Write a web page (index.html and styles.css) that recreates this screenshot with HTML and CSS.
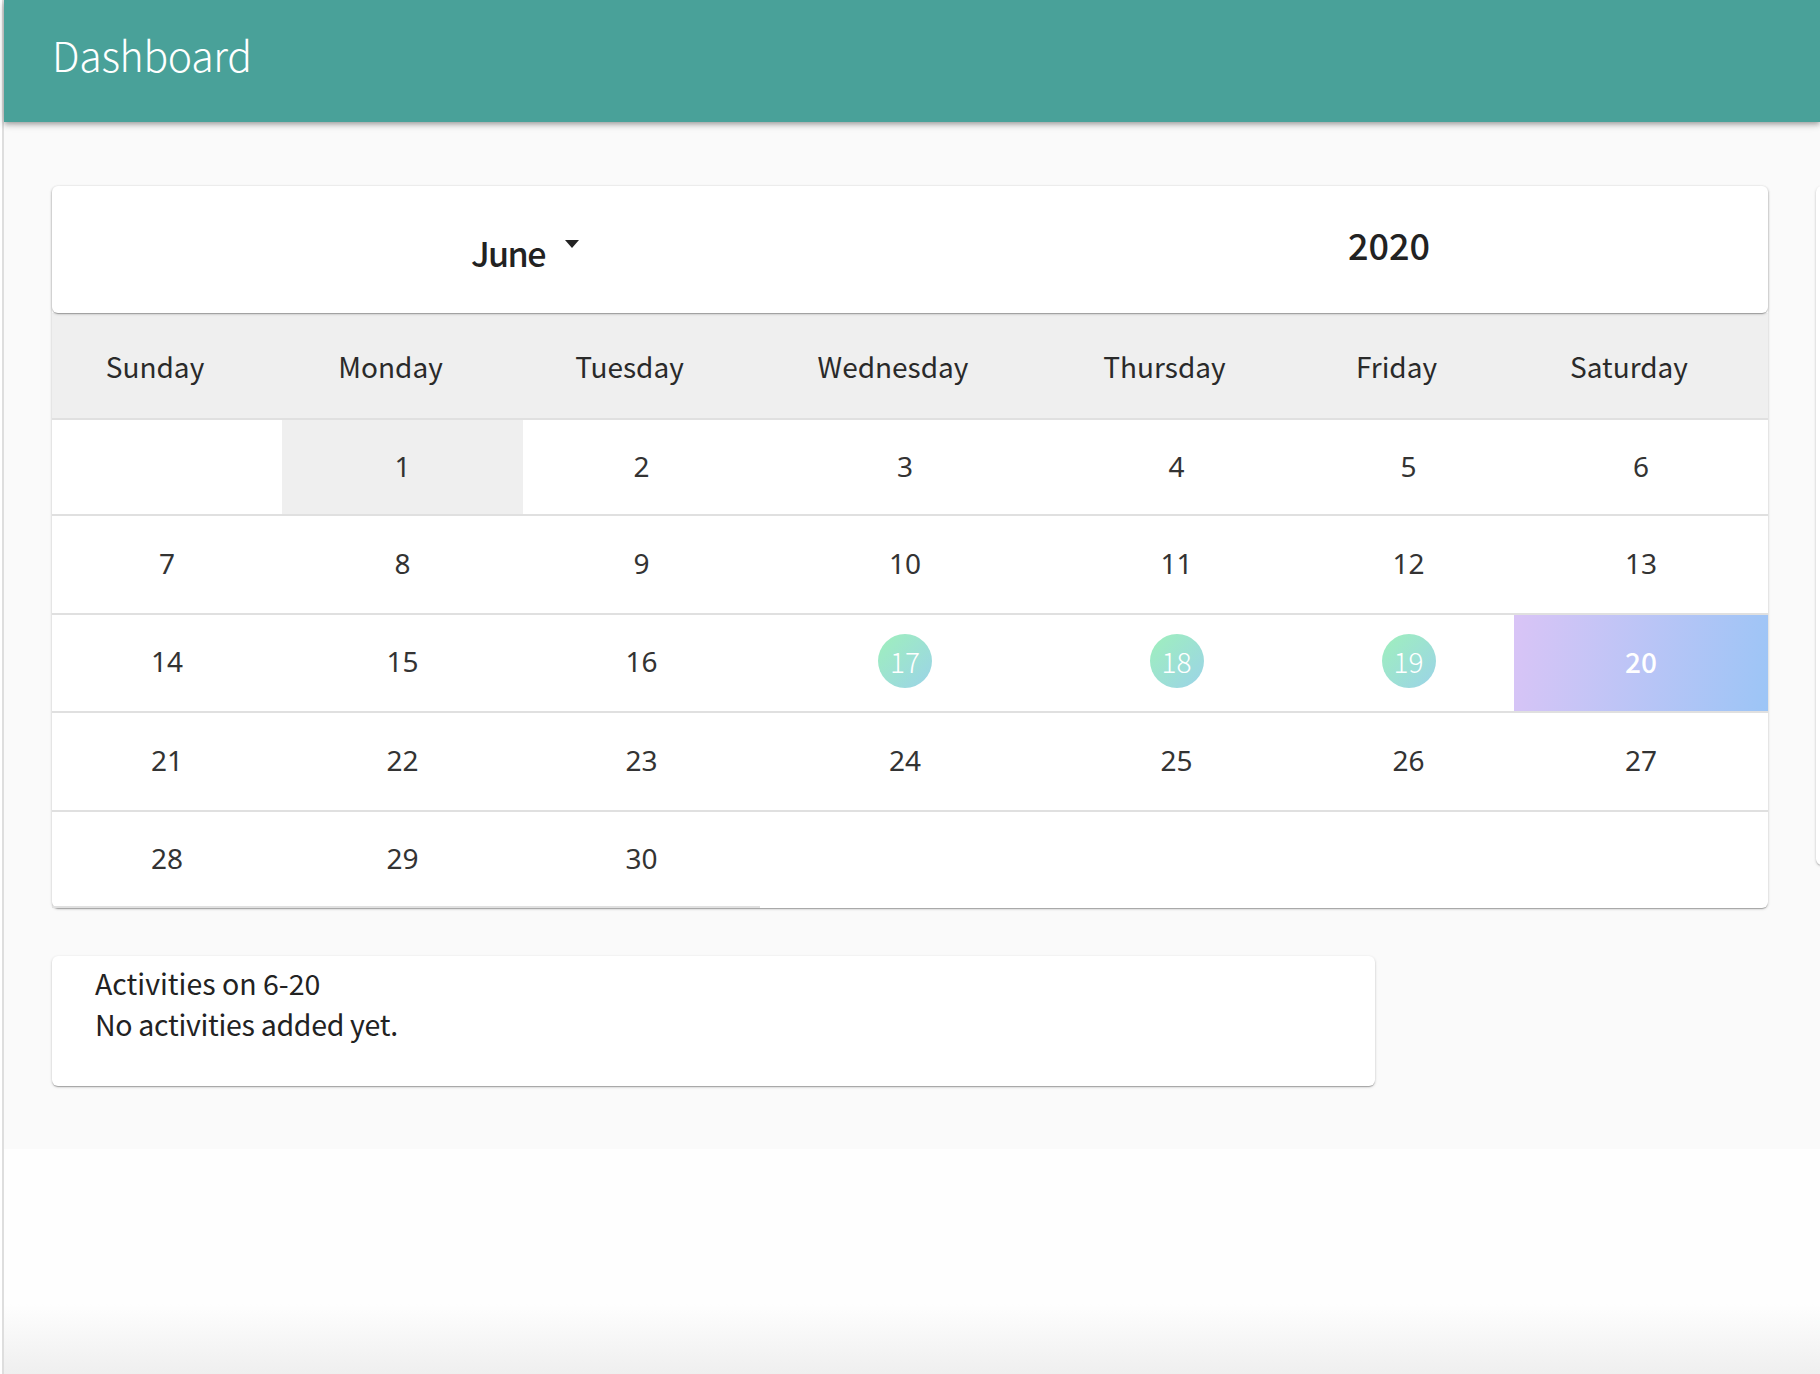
FILE: index.html
```html
<!DOCTYPE html>
<html lang="en">
<head>
<meta charset="utf-8">
<title>Dashboard</title>
<link rel="stylesheet" href="styles.css">
</head>
<body>
<div class="app">
  <header class="appbar"><h1 class="title">Dashboard</h1></header>
  <main class="content">
    <div class="layout">
      <div class="main-col">
        <section class="calendar">
          <div class="cal-head">
            <div class="month-col">
              <span class="month">June</span>
              <svg class="caret" width="16" height="8" viewBox="0 0 16 8"><path d="M1 0 L15 0 L8 8 Z" fill="#222"/></svg>
            </div>
            <div class="year-col"><span class="year">2020</span></div>
          </div>
          <div class="cal-body">
            <div class="grid weekdays">
              <div class="wd">Sunday</div><div class="wd">Monday</div><div class="wd">Tuesday</div><div class="wd">Wednesday</div><div class="wd">Thursday</div><div class="wd">Friday</div><div class="wd">Saturday</div>
            </div>
            <div class="grid week first">
              <div class="day empty"></div><div class="day today-ish"><span class="num">1</span></div><div class="day"><span class="num">2</span></div><div class="day"><span class="num">3</span></div><div class="day"><span class="num">4</span></div><div class="day"><span class="num">5</span></div><div class="day"><span class="num">6</span></div>
            </div>
            <div class="grid week">
              <div class="day"><span class="num">7</span></div><div class="day"><span class="num">8</span></div><div class="day"><span class="num">9</span></div><div class="day"><span class="num">10</span></div><div class="day"><span class="num">11</span></div><div class="day"><span class="num">12</span></div><div class="day"><span class="num">13</span></div>
            </div>
            <div class="grid week">
              <div class="day"><span class="num">14</span></div><div class="day"><span class="num">15</span></div><div class="day"><span class="num">16</span></div><div class="day"><span class="num dot">17</span></div><div class="day"><span class="num dot">18</span></div><div class="day"><span class="num dot">19</span></div><div class="day selected"><span class="num sel">20</span></div>
            </div>
            <div class="grid week">
              <div class="day"><span class="num">21</span></div><div class="day"><span class="num">22</span></div><div class="day"><span class="num">23</span></div><div class="day"><span class="num">24</span></div><div class="day"><span class="num">25</span></div><div class="day"><span class="num">26</span></div><div class="day"><span class="num">27</span></div>
            </div>
            <div class="grid week last">
              <div class="day filled"><span class="num">28</span></div><div class="day filled"><span class="num">29</span></div><div class="day filled"><span class="num">30</span></div><div class="day empty"></div><div class="day empty"></div><div class="day empty"></div><div class="day empty"></div>
            </div>
          </div>
        </section>
        <section class="activities">
          <p class="act-title">Activities on 6-20</p>
          <p class="act-empty">No activities added yet.</p>
        </section>
      </div>
      <aside class="side-card"></aside>
    </div>
  </main>
  <div class="filler"></div>
</div>
</body>
</html>
```

FILE: styles.css
```css
html, body {
  margin: 0;
  padding: 0;
  height: 100%;
}
body {
  background: #ffffff;
  font-family: "Noto Sans CJK KR", "Noto Sans", sans-serif;
  color: #222;
  overflow: hidden;
}
.app {
  margin-left: 2px;
  border-left: 2px solid #dedede;
  min-height: 100vh;
  display: flex;
  flex-direction: column;
}
.appbar {
  height: 122px;
  background: #49a199;
  display: flex;
  align-items: center;
  padding-left: 48px;
  box-shadow: 0 2px 4px -1px rgba(0,0,0,0.2), 0 4px 5px 0 rgba(0,0,0,0.14), 0 1px 10px 0 rgba(0,0,0,0.12);
  position: relative;
  z-index: 2;
}
.title {
  margin: 0 0 14px 0;
  font-weight: 300;
  font-size: 41px;
  color: #ffffff;
  letter-spacing: -0.3px;
}
.content {
  background: #fafafa;
  padding: 64px 0 63px 48px;
  overflow: hidden;
}
.layout {
  display: flex;
  gap: 48px;
  align-items: flex-start;
}
.main-col {
  display: flex;
  flex-direction: column;
  gap: 48px;
  flex: none;
}
.calendar {
  width: 1716px;
  background: #fff;
  border-radius: 6px;
  box-shadow: 0 1px 3px 0 rgba(0,0,0,0.2), 0 1px 1px 0 rgba(0,0,0,0.14), 0 2px 1px -1px rgba(0,0,0,0.12);
}
.cal-head {
  height: 127px;
  display: grid;
  grid-template-columns: 1fr 1fr;
  align-items: center;
  background: #fff;
  border-radius: 6px;
  position: relative;
  z-index: 1;
  box-shadow: 0 1px 3px 0 rgba(0,0,0,0.2), 0 1px 1px 0 rgba(0,0,0,0.14), 0 2px 1px -1px rgba(0,0,0,0.12);
}
.month-col {
  padding-left: 419px;
  padding-top: 6px;
  display: flex;
  align-items: center;
  gap: 19px;
}
.year-col {
  padding-left: 438px;
  padding-bottom: 8px;
}
.month, .year {
  font-size: 36px;
  font-weight: 500;
  color: #222;
  line-height: 1;
}
.month {
  font-size: 34px;
  letter-spacing: -1.6px;
}
.caret {
  margin-top: -18px;
}
.grid {
  display: grid;
  grid-template-columns: 230px 241px 237px 290px 253px 211px 254px;
}
.weekdays {
  height: 105px;
  background: #efefef;
}
.wd {
  display: flex;
  align-items: center;
  justify-content: center;
  padding-right: 24px;
  font-size: 28px;
  font-weight: 400;
  color: #2a2a2a;
}
.week {
  height: 98.5px;
  box-sizing: border-box;
  border-top: 2px solid #e0e0e0;
}
.week.first {
  height: 96px;
}
.day {
  display: flex;
  align-items: center;
  justify-content: center;
  padding-bottom: 3px;
}
.num {
  font-family: "Noto Sans", sans-serif;
  font-size: 28px;
  color: #333;
}
.today-ish {
  background: #efefef;
}
.week.last .filled {
  box-shadow: inset 0 -2px 0 #e0e0e0;
}
.dot {
  width: 54px;
  height: 54px;
  border-radius: 50%;
  display: flex;
  align-items: center;
  justify-content: center;
  background: linear-gradient(135deg, #9ff0bc 0%, #9bd3e8 100%);
  color: #fff;
  font-family: "Noto Sans CJK KR", sans-serif;
  font-weight: 300;
}
.selected {
  background: linear-gradient(100deg, #d9c4f6 0%, #9cc5f6 100%);
}
.sel {
  font-family: "Noto Sans CJK KR", sans-serif;
  font-weight: 500;
  color: #fff;
}
.activities {
  width: 1323px;
  box-sizing: border-box;
  background: #fff;
  border-radius: 6px;
  padding: 6px 43px 42px;
  box-shadow: 0 1px 3px 0 rgba(0,0,0,0.2), 0 1px 1px 0 rgba(0,0,0,0.14), 0 2px 1px -1px rgba(0,0,0,0.12);
}
.act-title, .act-empty {
  margin: 0;
  font-size: 28.5px;
  line-height: 41px;
  color: #222;
}
.act-empty {
  letter-spacing: -0.3px;
}
.side-card {
  flex: none;
  width: 400px;
  height: 679px;
  background: #fff;
  border-radius: 6px;
  box-shadow: 0 1px 3px 0 rgba(0,0,0,0.2), 0 1px 1px 0 rgba(0,0,0,0.14);
}
.filler {
  flex: 1;
  background: linear-gradient(to bottom, #fefefe 0%, #fefefe calc(100% - 70px), #efefef 100%);
}
```
